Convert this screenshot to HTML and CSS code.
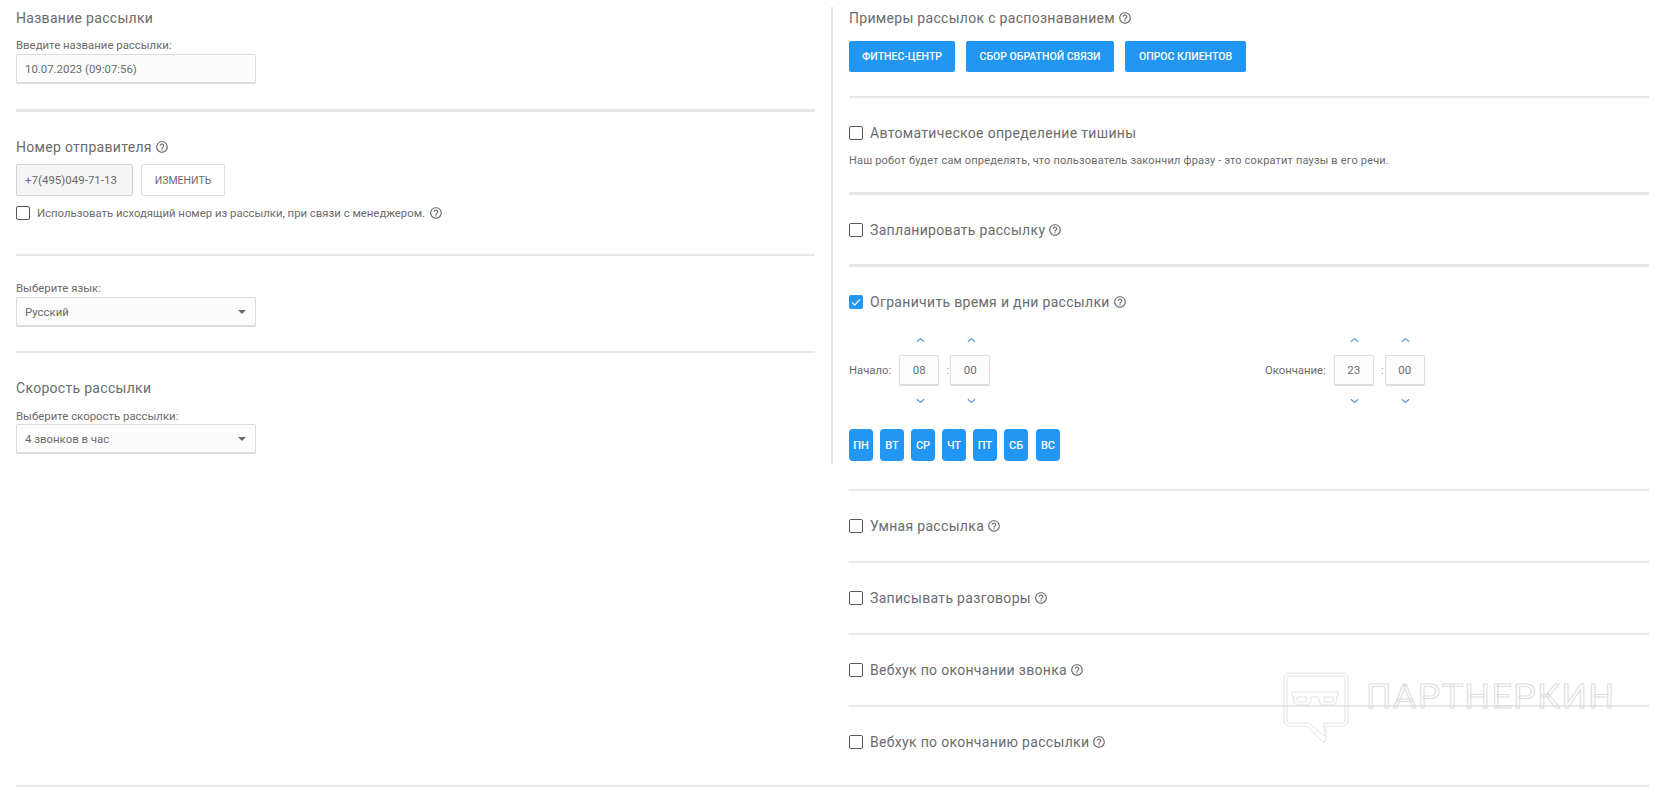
FILE: index.html
```html
<!DOCTYPE html>
<html lang="ru">
<head>
<meta charset="utf-8">
<title>Настройки рассылки</title>
<link rel="stylesheet" href="styles.css">
</head>
<body>
<svg class="defs" width="0" height="0" aria-hidden="true">
  <symbol id="help" viewBox="0 0 24 24"><path d="M11 18h2v-2h-2v2zm1-16C6.48 2 2 6.48 2 12s4.48 10 10 10 10-4.48 10-10S17.52 2 12 2zm0 18c-4.41 0-8-3.59-8-8s3.59-8 8-8 8 3.59 8 8-3.59 8-8 8zm0-14c-2.21 0-4 1.79-4 4h2c0-1.1.9-2 2-2s2 .9 2 2c0 2-3 1.75-3 5h2c0-2.25 3-2.500 3-5 0-2.210-1.790-4-4-4z"/></symbol>
  <symbol id="up" viewBox="0 0 10 6"><path d="M1 5l4-3.600L9 5" fill="none" stroke="currentColor" stroke-width="1.400"/></symbol>
  <symbol id="down" viewBox="0 0 10 6"><path d="M1 1l4 3.600L9 1" fill="none" stroke="currentColor" stroke-width="1.400"/></symbol>
</svg>
<div class="columns">
  <div class="left">
    <section class="l1 rule-3">
      <h3 class="title">Название рассылки</h3>
      <div class="label mt9">Введите название рассылки:</div>
      <div class="field field-name">10.07.2023 (09:07:56)</div>
    </section>
    <section class="l2 rule-2">
      <h3 class="title">Номер отправителя <svg class="help"><use href="#help"/></svg></h3>
      <div class="phone-row">
        <div class="phone">+7(495)049-71-13</div>
        <div class="change">ИЗМЕНИТЬ</div>
      </div>
      <div class="use-row"><span class="check"></span><span>Использовать исходящий номер из рассылки, при связи с менеджером.</span> <svg class="help"><use href="#help"/></svg></div>
    </section>
    <section class="l3 rule-2">
      <div class="label">Выберите язык:</div>
      <div class="field">Русский<span class="caret"></span></div>
    </section>
    <section class="l4">
      <h3 class="title">Скорость рассылки</h3>
      <div class="label mt10">Выберите скорость рассылки:</div>
      <div class="field field-speed">4 звонков в час<span class="caret"></span></div>
    </section>
  </div>
  <div class="right">
    <section class="r-a rule-2">
      <h3 class="title">Примеры рассылок с распознаванием <svg class="help"><use href="#help"/></svg></h3>
      <div class="examples">
        <div class="btn btn-a">ФИТНЕС-ЦЕНТР</div>
        <div class="btn btn-b">СБОР ОБРАТНОЙ СВЯЗИ</div>
        <div class="btn btn-c">ОПРОС КЛИЕНТОВ</div>
      </div>
    </section>
    <section class="r-b rule-3">
      <div class="opt"><span class="check"></span>Автоматическое определение тишины</div>
      <p class="desc">Наш робот будет сам определять, что пользователь закончил фразу - это сократит паузы в его речи.</p>
    </section>
    <section class="r-c rule-3">
      <div class="opt"><span class="check"></span>Запланировать рассылку <svg class="help"><use href="#help"/></svg></div>
    </section>
    <section class="r-d rule-2">
      <div class="opt"><span class="check checked"><svg viewBox="0 0 14 14"><path d="M3 7.400l2.700 2.700L11 4.400" fill="none" stroke="#fff" stroke-width="1.300"/></svg></span>Ограничить время и дни рассылки <svg class="help"><use href="#help"/></svg></div>
      <div class="times">
        <div class="time">
          <span class="time-label">Начало:</span>
          <div class="spin"><svg class="arrow"><use href="#up"/></svg><div class="box">08</div><svg class="arrow"><use href="#down"/></svg></div>
          <span class="colon">:</span>
          <div class="spin"><svg class="arrow"><use href="#up"/></svg><div class="box">00</div><svg class="arrow"><use href="#down"/></svg></div>
        </div>
        <div class="time">
          <span class="time-label">Окончание:</span>
          <div class="spin"><svg class="arrow"><use href="#up"/></svg><div class="box">23</div><svg class="arrow"><use href="#down"/></svg></div>
          <span class="colon">:</span>
          <div class="spin"><svg class="arrow"><use href="#up"/></svg><div class="box">00</div><svg class="arrow"><use href="#down"/></svg></div>
        </div>
      </div>
      <div class="days">
        <div class="day">ПН</div><div class="day">ВТ</div><div class="day">СР</div><div class="day">ЧТ</div><div class="day">ПТ</div><div class="day">СБ</div><div class="day day-last">ВС</div>
      </div>
    </section>
    <section class="r-e rule-2">
      <div class="opt"><span class="check"></span>Умная рассылка <svg class="help"><use href="#help"/></svg></div>
    </section>
    <section class="r-f rule-2">
      <div class="opt"><span class="check"></span>Записывать разговоры <svg class="help"><use href="#help"/></svg></div>
    </section>
    <section class="r-g rule-2">
      <div class="opt"><span class="check"></span>Вебхук по окончании звонка <svg class="help"><use href="#help"/></svg></div>
    </section>
    <section class="r-h">
      <div class="opt"><span class="check"></span>Вебхук по окончанию рассылки <svg class="help"><use href="#help"/></svg></div>
    </section>
  </div>
</div>
<div class="bottom-rule"></div>
<div class="watermark">
  <svg class="wm-logo" viewBox="0 0 66 71" fill="none" stroke="#e2e2e2" stroke-width="1">
    <path d="M6 1h54a5 5 0 0 1 5 5v43a5 5 0 0 1-5 5H43v14a2.200 2.200 0 0 1-4 1.300L24 54H6a5 5 0 0 1-5-5V6a5 5 0 0 1 5-5z"/>
    <path d="M6 4h54a2 2 0 0 1 2 2v43a2 2 0 0 1-2 2H41v13L26 51H6a2 2 0 0 1-2-2V6a2 2 0 0 1 2-2z"/>
    <path d="M9 20h46v4.500h-1.500V28a5 5 0 0 1-5 5H41a5 5 0 0 1-5-5v-3h-8v3a5 5 0 0 1-5 5h-7.500a5 5 0 0 1-5-5v-3.500H9z"/>
    <path d="M14 25h9.500v3a2 2 0 0 1-2 2H16a2 2 0 0 1-2-2zM41 25h9.500v3a2 2 0 0 1-2 2H43a2 2 0 0 1-2-2z"/>
  </svg>
  <span class="wm-text">ПАРТНЕРКИН</span>
</div>
</body>
</html>
```
FILE: styles.css
```css
* { box-sizing: border-box; }
html, body { margin: 0; padding: 0; }
body {
  background: #fff;
  color: #6b6b6b;
  font-family: Roboto, "Noto Sans", sans-serif;
  font-size: 12px;
  padding: 7px 14px 0 16px;
  height: 794px;
  overflow: hidden;
  position: relative;
}
.defs { position: absolute; }
.columns { display: flex; align-items: flex-start; }
.left { width: 817px; padding-right: 16px; border-right: 2px solid #e5e5e5; flex: none; }
.right { width: 800px; margin-left: 16px; flex: none; }

.rule-2 { border-bottom: 2px solid #e6e6e6; }
.rule-3 { border-bottom: 3px solid #e6e6e6; }
.bottom-rule { height: 2px; background: #e6e6e6; margin-top: 33px; }

.title { margin: 0; font-size: 14px; font-weight: 400; line-height: 20px; height: 20px; display: flex; align-items: center; gap: 3px; letter-spacing: .3px; }
.label { font-size: 11.4px; line-height: 16px; height: 16px; margin-bottom: 1px; }
.mt9 { margin-top: 9px; }
.mt10 { margin-top: 10px; }
.help { width: 14px; height: 14px; fill: #6b6b6b; flex: none; }

.field {
  width: 240px; height: 30px; padding: 0 8px; background: #fcfcfc;
  border: 1px solid #dcdcdc; border-bottom-width: 2px; border-radius: 2px;
  display: flex; align-items: center; justify-content: space-between;
  font-size: 11.4px;
}
.field-speed { height: 30px; margin-top: -1px; }
.caret { width: 0; height: 0; border: 4px solid transparent; border-top-color: #6b6b6b; border-bottom: 0; margin-right: 1px; }

.l1 { padding: 1px 0 25px; }
.l2 { padding: 25px 0 32px; }
.l3 { padding: 24px 0 24px; }
.l4 { padding: 25px 0 10px; }

.phone-row { display: flex; gap: 8px; margin-top: 7px; }
.phone { width: 117px; height: 32px; background: #f5f5f5; border: 1px solid #d0d0d0; border-radius: 2px; display: flex; align-items: center; padding-left: 8px; font-size: 11.5px; }
.change { width: 84px; height: 32px; border: 1px solid #e0e0e0; border-radius: 2px; display: flex; align-items: center; justify-content: center; font-size: 10.5px; }
.use-row { display: flex; align-items: center; height: 18px; margin-top: 8px; font-size: 11.35px; }
.use-row .check { margin-right: 7px; }
.use-row .help { margin-left: 4px; }

.check { width: 14px; height: 14px; border: 1px solid #555; border-radius: 2px; flex: none; display: inline-block; background: #fff; }
.checked { background: #2196f3; border: 0; }
.checked svg { display: block; width: 14px; height: 14px; }

.r-a { padding: 1px 0 24px; }
.examples { display: flex; gap: 11px; margin-top: 13px; }
.btn { height: 31px; background: #2196f3; color: #fff; border-radius: 2px; font-size: 10.5px; font-weight: 500; display: flex; align-items: center; justify-content: center; }
.btn-a { width: 106px; }
.btn-b { width: 148px; }
.btn-c { width: 121px; }

.opt { display: flex; align-items: center; height: 20px; font-size: 14px; letter-spacing: .32px; gap: 3px; }
.opt .check { margin-right: 4px; }
.desc { margin: 10px 0 0; font-size: 11px; line-height: 16px; height: 16px; letter-spacing: .18px; }
.r-b { padding: 25px 0 23px; }
.r-c { padding: 25px 0 24px; }
.r-d { padding: 25px 0 28px; }
.r-e { padding: 25px 0 25px; }
.r-f { padding: 25px 0 25px; }
.r-g { padding: 25px 0 25px; }
.r-h { padding-top: 25px; }

.times { display: grid; grid-template-columns: 416px 1fr; margin-top: 21px; }
.time { display: flex; align-items: center; }
.time-label { font-size: 11.3px; margin-right: 8px; }
.spin { width: 40px; display: flex; flex-direction: column; align-items: center; gap: 8px; }
.arrow { width: 9px; height: 14px; color: #5a9fdc; margin-left: 2px; display: block; }
.box { width: 40px; height: 31px; border: 1px solid #ddd; border-bottom-width: 2px; border-radius: 2px; background: #fdfdfd; display: flex; align-items: center; justify-content: center; font-size: 11.5px; }
.colon { width: 11px; text-align: right; padding-right: 1px; font-size: 11px; color: #999; }

.days { display: flex; gap: 7px; margin-top: 21px; }
.day { width: 24px; height: 32px; background: #2196f3; color: #fff; border-radius: 4px; font-size: 11px; font-weight: 500; display: flex; align-items: center; justify-content: center; }
.day-last { margin-left: 1px; }

.watermark { position: absolute; left: 1283px; top: 672px; display: flex; align-items: flex-start; gap: 17px; pointer-events: none; }
.wm-logo { width: 66px; height: 71px; flex: none; }
.wm-text { font-family: Roboto, sans-serif; font-size: 33px; line-height: 24px; height: 24px; margin-top: 13px; letter-spacing: 1.4px; color: transparent; -webkit-text-stroke: 1px #dedede; transform: scaleX(1.08); transform-origin: left center; }
```
